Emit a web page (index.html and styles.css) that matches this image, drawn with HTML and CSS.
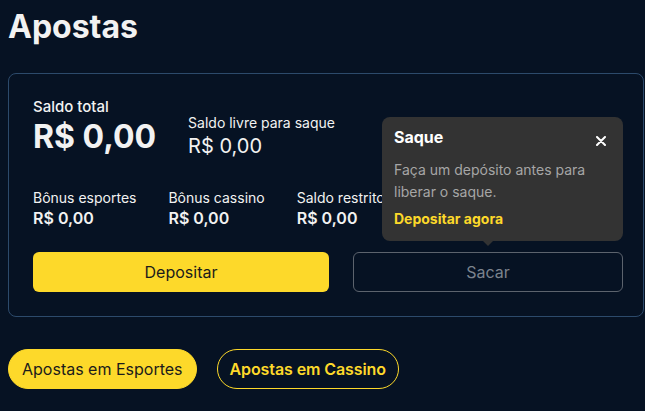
FILE: index.html
```html
<!DOCTYPE html>
<html lang="pt-BR">
<head>
    <meta charset="UTF-8">
    <meta name="viewport" content="width=device-width, initial-scale=1.0">
    <title>Apostas</title>
    <link rel="stylesheet" href="styles.css">
</head>
<body>
    <div class="page">
        <h1>Apostas</h1>

        <div class="wallet">
            <div class="wallet-top">
                <div class="balance-total">
                    <span class="label-lg">Saldo total</span>
                    <span class="amount-xl">R$ 0,00</span>
                </div>
                <div class="balance-free">
                    <span class="label">Saldo livre para saque</span>
                    <span class="amount-md">R$ 0,00</span>
                </div>
            </div>

            <div class="wallet-details">
                <div class="detail">
                    <span class="label">Bônus esportes</span>
                    <span class="amount-sm">R$ 0,00</span>
                </div>
                <div class="detail">
                    <span class="label">Bônus cassino</span>
                    <span class="amount-sm">R$ 0,00</span>
                </div>
                <div class="detail">
                    <span class="label">Saldo restrito</span>
                    <span class="amount-sm">R$ 0,00</span>
                </div>
            </div>

            <div class="wallet-actions">
                <button type="button" class="btn btn-primary">Depositar</button>
                <div class="withdraw">
                    <button type="button" class="btn btn-outline">Sacar</button>

                    <!-- Tooltip over the Sacar button -->
                    <div class="tooltip">
                        <div class="tooltip-title">Saque</div>
                        <button type="button" class="tooltip-close" aria-label="Fechar">
                            <svg width="10" height="10" viewBox="0 0 10 10">
                                <path d="M1 1 L9 9 M9 1 L1 9" stroke="#ffffff" stroke-width="2" stroke-linecap="round"/>
                            </svg>
                        </button>
                        <p class="tooltip-text">Faça um depósito antes para liberar o saque.</p>
                        <a href="#" class="tooltip-link">Depositar agora</a>
                    </div>
                </div>
            </div>
        </div>

        <div class="tabs">
            <a href="#" class="pill pill-active">Apostas em Esportes</a>
            <a href="#" class="pill">Apostas em Cassino</a>
        </div>
    </div>
</body>
</html>
```

FILE: styles.css
```css
:root {
    --bg-color: #061223;
    --text-color: #f2f2f2;
    --card-border: #2c4a6b;
    --yellow: #fdd92a;
    --muted: #7b838e;
    --tooltip-bg: #333333;
}

body {
    margin: 0;
    background-color: var(--bg-color);
    color: var(--text-color);
    font-family: Inter, "Noto Sans", sans-serif;
    min-height: 100vh;
}

.page {
    padding: 8px 1px 0 8px;
}

h1 {
    font-size: 32px;
    line-height: 38px;
    font-weight: 700;
    margin: 0 0 27px;
}

.wallet {
    border: 1px solid var(--card-border);
    border-radius: 8px;
    padding: 23px 20px 24px 24px;
}

.wallet-top {
    display: flex;
    gap: 32px;
    align-items: flex-start;
}

.balance-total,
.balance-free,
.detail {
    display: flex;
    flex-direction: column;
}

.balance-free {
    margin-top: 16px;
}

.label-lg {
    font-size: 15px;
    line-height: 20px;
    font-weight: 500;
}

.amount-xl {
    font-size: 32px;
    line-height: 36px;
    font-weight: 700;
    margin-top: 2px;
}

.label {
    font-size: 14px;
    line-height: 20px;
}

.amount-md {
    font-size: 20px;
    line-height: 24px;
    margin-top: 1px;
}

.amount-sm {
    font-size: 16px;
    line-height: 20px;
    font-weight: 600;
}

.wallet-details {
    display: flex;
    gap: 32px;
    margin-top: 30px;
}

.wallet-actions {
    display: grid;
    grid-template-columns: 296fr 270fr;
    gap: 24px;
    margin-top: 24px;
}

.withdraw {
    position: relative;
}

.btn {
    width: 100%;
    height: 40px;
    border-radius: 6px;
    font-family: inherit;
    font-size: 16px;
    cursor: pointer;
}

.btn-primary {
    background-color: var(--yellow);
    color: #1b1b1b;
    border: none;
}

.btn-outline {
    background-color: transparent;
    color: var(--muted);
    border: 1px solid #5c636d;
}

.tooltip {
    position: absolute;
    right: 0;
    bottom: 51px;
    width: 241px;
    box-sizing: border-box;
    padding: 10px 12px 12px;
    background-color: var(--tooltip-bg);
    border-radius: 8px;
}

.tooltip::after {
    content: "";
    position: absolute;
    right: 130px;
    bottom: -5px;
    border-left: 5px solid transparent;
    border-right: 5px solid transparent;
    border-top: 5px solid var(--tooltip-bg);
}

.tooltip-title {
    font-size: 16px;
    line-height: 20px;
    font-weight: 700;
    color: #ffffff;
}

.tooltip-close {
    position: absolute;
    top: 19px;
    right: 17px;
    width: 10px;
    height: 10px;
    padding: 0;
    border: none;
    background: none;
    display: flex;
    cursor: pointer;
}

.tooltip-text {
    margin: 12px 0 0;
    font-size: 14px;
    line-height: 22px;
    color: #a6a6a6;
}

.tooltip-link {
    display: block;
    margin-top: 6px;
    font-size: 14px;
    line-height: 20px;
    font-weight: 700;
    color: var(--yellow);
    text-decoration: none;
}

.tabs {
    display: flex;
    gap: 20px;
    margin-top: 32px;
}

.pill {
    height: 40px;
    box-sizing: border-box;
    display: flex;
    align-items: center;
    padding: 0 12px;
    border-radius: 20px;
    font-size: 16px;
    text-decoration: none;
    color: var(--yellow);
    border: 1px solid var(--yellow);
    font-weight: 600;
    letter-spacing: -0.1px;
}

.pill-active {
    background-color: var(--yellow);
    color: #1b1b1b;
    font-weight: 400;
    letter-spacing: 0;
    padding: 0 13px;
}
```
